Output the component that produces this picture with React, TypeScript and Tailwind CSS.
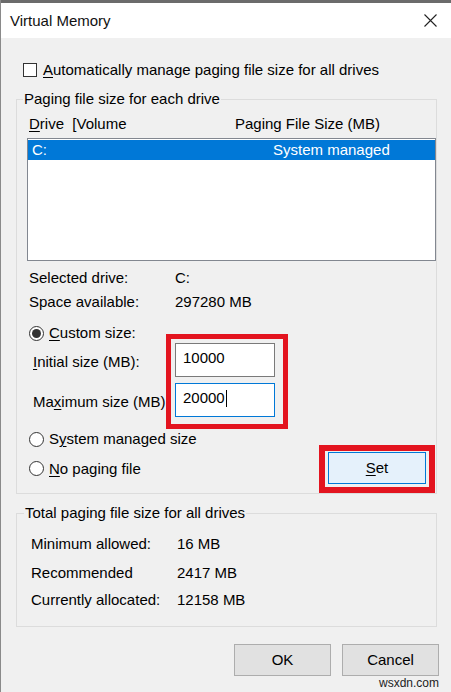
import type { ReactNode } from "react";

function Radio({ checked }: { checked?: boolean }) {
  return (
    <span className="flex h-[15px] w-[15px] shrink-0 items-center justify-center rounded-full border border-[#333333] bg-white">
      {checked && <span className="h-[9px] w-[9px] rounded-full bg-[#333333]" />}
    </span>
  );
}

function Key({ children }: { children: ReactNode }) {
  return <span className="underline decoration-1 underline-offset-[2px]">{children}</span>;
}

function TextBox({
  value,
  focused,
}: {
  value: string;
  focused?: boolean;
}) {
  return (
    <div
      className={`flex h-[34px] w-[100px] items-start border bg-white pl-[7px] pt-[4px] ${
        focused ? "border-[#0078d7]" : "border-[#7a7a7a]"
      }`}
    >
      <span>{value}</span>
      {focused && <span className="ml-px mt-[2px] inline-block h-[17px] w-px bg-black" />}
    </div>
  );
}

const totals = [
  { label: "Minimum allowed:", value: "16 MB", mt: "mt-[11px]" },
  { label: "Recommended", value: "2417 MB", mt: "mt-[9px]" },
  { label: "Currently allocated:", value: "12158 MB", mt: "mt-[7px]" },
];

export default function App() {
  return (
    <div className="relative h-[692px] w-[451px] overflow-hidden border-l border-[#8a8a8a] bg-[#f0f0f0] font-['Liberation_Sans',Arial,sans-serif] text-[15px] leading-[20px] text-black">
      <div className="h-[3px] bg-[#6b6b6b]" />

      {/* title bar */}
      <div className="flex h-[35px] items-center justify-between bg-white pl-[9px] pr-[14px]">
        <span className="text-[#111]">Virtual Memory</span>
        <svg width="13" height="13" viewBox="0 0 13 13" className="text-[#222]">
          <path d="M0.5 0.5 L12.5 12.5 M12.5 0.5 L0.5 12.5" stroke="currentColor" strokeWidth="1.1" fill="none" />
        </svg>
      </div>

      {/* auto manage */}
      <div className="mt-[22px] flex h-[20px] items-center pl-[22px]">
        <span className="h-[14px] w-[14px] border border-[#333333] bg-white" />
        <span className="ml-[6px]">
          <Key>A</Key>utomatically manage paging file size for all drives
        </span>
      </div>

      {/* per drive group */}
      <fieldset className="ml-[15px] mt-[9px] w-[421px] border border-[#dcdcdc] pb-[9px]">
        <legend className="ml-[6px] px-[1px]">Paging file size for each drive</legend>

        <div className="mt-[5px] flex h-[20px] items-center pl-[12px]">
          <span className="w-[206px]">
            <Key>D</Key>rive&nbsp; [Volume
          </span>
          <span>Paging File Size (MB)</span>
        </div>

        <div className="ml-[10px] mt-[4px] h-[123px] w-[409px] border border-[#828790] bg-white pt-px">
          <div className="flex h-[20px] items-center bg-[#0078d7] pl-[4px] text-white">
            <span className="w-[241px]">C:</span>
            <span>System managed</span>
          </div>
        </div>

        <div className="mt-[7px] flex h-[20px] items-center pl-[12px]">
          <span className="w-[146px]">Selected drive:</span>
          <span>C:</span>
        </div>
        <div className="mt-[4px] flex h-[20px] items-center pl-[12px]">
          <span className="w-[146px]">Space available:</span>
          <span>297280 MB</span>
        </div>

        <div className="mt-[11px] flex h-[20px] items-center gap-[5px] pl-[12px]">
          <Radio checked />
          <span>
            <Key>C</Key>ustom size:
          </span>
        </div>

        <div className="grid grid-cols-[142px_100px] items-center gap-y-[6px] pl-[16px]">
          <span className="mt-[4px]">
            <Key>I</Key>nitial size (MB):
          </span>
          <TextBox value="10000" />
          <span className="mt-[3px]">
            Ma<Key>x</Key>imum size (MB):
          </span>
          <TextBox value="20000" focused />
        </div>

        <div className="mt-[12px] flex h-[20px] items-center gap-[5px] pl-[12px]">
          <Radio />
          <span>
            S<Key>y</Key>stem managed size
          </span>
        </div>

        <div className="mt-[3px] flex items-center pl-[12px] pr-[10px]">
          <Radio />
          <span className="ml-[5px] mt-[1px]">
            <Key>N</Key>o paging file
          </span>
          <button
            type="button"
            className="ml-auto flex h-[32px] w-[98px] items-center justify-center border border-[#0078d7] bg-[#e5f1fb]"
          >
            <Key>S</Key>et
          </button>
        </div>
      </fieldset>

      {/* totals group */}
      <fieldset className="ml-[15px] mt-[9px] w-[421px] border border-[#dcdcdc] pb-[16px]">
        <legend className="ml-[7px] px-[1px]">Total paging file size for all drives</legend>
        {totals.map((t) => (
          <div key={t.label} className={`${t.mt} flex h-[20px] items-center pl-[14px]`}>
            <span className="w-[146px]">{t.label}</span>
            <span>{t.value}</span>
          </div>
        ))}
      </fieldset>

      {/* dialog buttons */}
      <div className="mt-[17px] flex justify-end gap-[11px] pr-[12px]">
        <button type="button" className="h-[32px] w-[97px] border border-[#adadad] bg-[#e1e1e1]">
          OK
        </button>
        <button type="button" className="h-[32px] w-[97px] border border-[#adadad] bg-[#e1e1e1]">
          Cancel
        </button>
      </div>

      {/* annotation highlights */}
      <div className="pointer-events-none absolute left-[165px] top-[334px] h-[95px] w-[122px] border-[5px] border-[#e3141f]" />
      <div className="pointer-events-none absolute left-[318px] top-[445px] h-[48px] w-[116px] border-[6px] border-[#e3141f]" />

      <span className="absolute bottom-[2px] right-[12px] text-[12px] leading-[14px] text-[#222]">wsxdn.com</span>
    </div>
  );
}
